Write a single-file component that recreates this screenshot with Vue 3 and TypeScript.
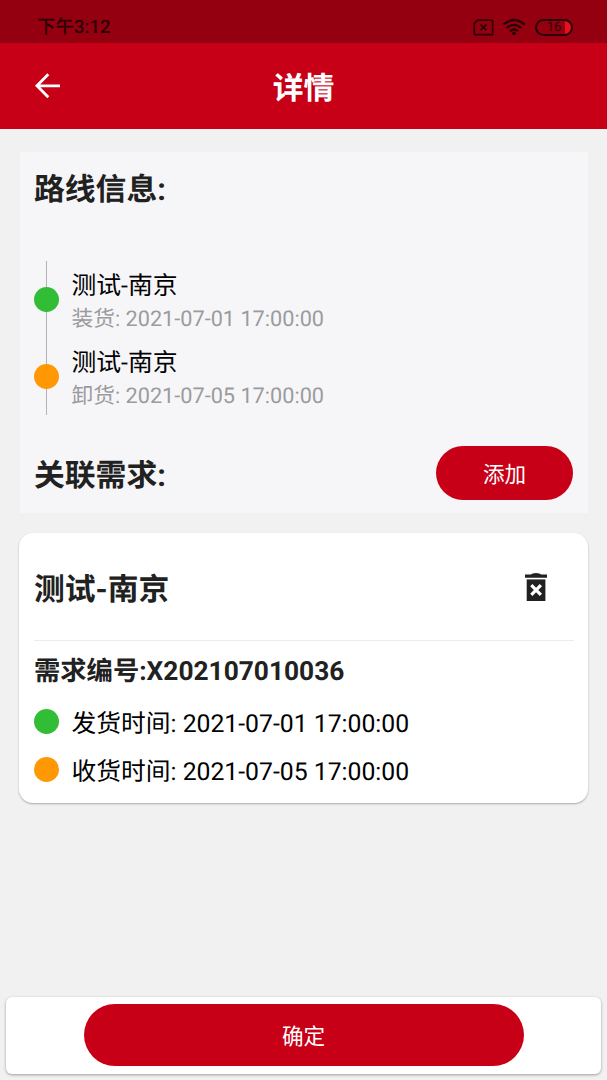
<script setup lang="ts">
interface Stop {
  place: string
  label: string
  time: string
  kind: 'load' | 'unload'
}

interface Demand {
  title: string
  code: string
  times: { label: string; time: string; kind: 'load' | 'unload' }[]
}

const stops: Stop[] = [
  { place: '测试-南京', label: '装货', time: '2021-07-01 17:00:00', kind: 'load' },
  { place: '测试-南京', label: '卸货', time: '2021-07-05 17:00:00', kind: 'unload' },
]

const demand: Demand = {
  title: '测试-南京',
  code: 'X202107010036',
  times: [
    { label: '发货时间', time: '2021-07-01 17:00:00', kind: 'load' },
    { label: '收货时间', time: '2021-07-05 17:00:00', kind: 'unload' },
  ],
}
</script>

<template>
  <div class="screen">
    <div class="status">
      <span class="clock">下午3:12</span>
      <div class="status-icons">
        <svg class="sim" width="21" height="17" viewBox="0 0 21 17">
          <path d="M4.6 1.2H18.3Q19.6 1.2 19.6 2.5V15.6H2.6Q1.3 15.6 1.3 14.3V4.4Z" fill="none" stroke="currentColor" stroke-width="1.7" />
          <path d="M7.4 5.4l6.2 6M13.6 5.4l-6.2 6" stroke="currentColor" stroke-width="1.6" />
        </svg>
        <svg class="wifi" width="24" height="18" viewBox="0 0 24 18">
          <g fill="none" stroke="currentColor" stroke-width="2.3">
            <path d="M1.3 6.6Q12 -2.6 22.7 6.6" />
            <path d="M4.8 10Q12 3.8 19.2 10" />
            <path d="M8 13.2Q12 9.8 16 13.2" />
          </g>
          <circle cx="12" cy="15.4" r="1.8" fill="currentColor" />
        </svg>
        <div class="battery"><span>16</span></div>
      </div>
    </div>

    <header class="bar">
      <svg class="back" width="26" height="26" viewBox="0 0 26 26">
        <path d="M25 12.8H2M13.3 1.3L1.9 12.8L13.3 24.3" fill="none" stroke="currentColor" stroke-width="2.8" />
      </svg>
      <h1>详情</h1>
    </header>

    <main class="content">
      <section class="route">
        <h2>路线信息:</h2>
        <div class="timeline">
          <div v-for="stop in stops" :key="stop.kind" class="stop">
            <div class="rail"><i class="dot" :class="stop.kind"></i></div>
            <div>
              <div class="place">{{ stop.place }}</div>
              <div class="when">{{ stop.label }}: {{ stop.time }}</div>
            </div>
          </div>
        </div>
        <div class="related">
          <h2>关联需求:</h2>
          <button class="add">添加</button>
        </div>
      </section>

      <section class="card">
        <div class="card-head">
          <h2>{{ demand.title }}</h2>
          <svg class="trash" width="22" height="28" viewBox="0 0 22 28">
            <path d="M0 1.6H6Q7 0 11 0Q15 0 16 1.6H22V4.8H0Z" fill="currentColor" />
            <path d="M1.7 6.4H20.4V28H1.7Z" fill="currentColor" />
            <path d="M6.3 12.2l9.6 9.6M15.9 12.2l-9.6 9.6" stroke="#fff" stroke-width="3.2" />
          </svg>
        </div>
        <div class="code">需求编号:{{ demand.code }}</div>
        <div v-for="row in demand.times" :key="row.kind" class="row">
          <i class="dot" :class="row.kind"></i>
          <span>{{ row.label }}: {{ row.time }}</span>
        </div>
      </section>
    </main>

    <footer class="footer">
      <button class="confirm">确定</button>
    </footer>
  </div>
</template>

<style>
body {
  background: #f1f1f1;
}
</style>

<style scoped>
.screen {
  box-sizing: border-box;
  width: 607px;
  height: 1080px;
  display: flex;
  flex-direction: column;
  overflow: hidden;
  background: #f1f1f1;
  font-family: Roboto, "Noto Sans CJK SC", sans-serif;
  text-rendering: geometricPrecision;
  color: #000;
}

h1,
h2 {
  margin: 0;
  font-weight: 700;
}

button {
  border: 0;
  padding: 0;
  font-family: inherit;
  color: #fff;
  background: #c70017;
}

.status {
  box-sizing: border-box;
  height: 43px;
  flex: none;
  display: flex;
  justify-content: space-between;
  padding: 12px 34px 0 37px;
  background: #940010;
  color: #2b0005;
}

.clock {
  font-size: 18.5px;
  line-height: 31px;
  font-weight: 500;
}

.status-icons {
  display: flex;
  align-items: flex-start;
  padding-top: 6px;
}

.sim {
  margin-top: 1px;
}

.wifi {
  margin-left: 8px;
}

.battery {
  box-sizing: border-box;
  width: 38px;
  height: 17px;
  margin: 1px 0 0 9px;
  border: 2px solid #2b0005;
  border-radius: 9px;
  background: linear-gradient(to right, #940010 28px, #e8101c 28px);
  text-align: center;
  font-size: 13px;
  line-height: 14px;
}

.bar {
  height: 86px;
  flex: none;
  display: grid;
  grid-template-columns: 1fr auto 1fr;
  align-items: center;
  background: #c70017;
  color: #fff;
}

.back {
  margin-left: 35px;
}

.bar h1 {
  padding-top: 5px;
  font-size: 30.8px;
  line-height: 40px;
}

.content {
  flex: 1;
  padding: 23px 19px 0;
}

.route {
  box-sizing: border-box;
  height: 361px;
  margin: 0 0 20px 1px;
  padding: 15px 15px 0 14px;
  background: #f6f6f8;
}

h2 {
  font-size: 30.8px;
  line-height: 46px;
  color: #212121;
}

.timeline {
  margin-top: 47.5px;
}

.stop {
  display: flex;
  height: 77px;
  gap: 12.5px;
}

.rail {
  display: flex;
  align-items: center;
  justify-content: center;
  width: 25px;
  background: linear-gradient(#b4b4b6, #b4b4b6) 12px 0 / 1px 100% no-repeat;
}

.dot {
  flex: none;
  width: 25px;
  height: 25px;
  border-radius: 50%;
}

.load {
  background: #32bd37;
}

.unload {
  background: #ff9802;
}

.place {
  margin-top: 8.5px;
  font-size: 24.8px;
  line-height: 36px;
}

.when {
  margin-top: -1px;
  font-size: 21.7px;
  line-height: 32px;
  color: #9b9b9d;
}

.related {
  display: flex;
  align-items: center;
  justify-content: space-between;
  margin-top: 31.5px;
}

.related h2 {
  padding-top: 5px;
}

.add {
  width: 137px;
  height: 54px;
  padding-bottom: 2px;
  border-radius: 27px;
  font-size: 21.6px;
}

.card {
  box-sizing: border-box;
  height: 270px;
  padding: 0 14px 0 15px;
  border-radius: 14px;
  background: #fff;
  box-shadow: 0 1px 2px rgba(0, 0, 0, 0.3);
}

.card-head {
  box-sizing: border-box;
  height: 108px;
  display: flex;
  justify-content: space-between;
  padding: 34px 27px 0 0;
  border-bottom: 1px solid #ececec;
}

.trash {
  margin-top: 6px;
  color: #212121;
}

.code {
  margin-top: 11px;
  font-size: 26.3px;
  line-height: 40px;
  font-weight: 700;
  color: #212121;
}

.row {
  display: flex;
  align-items: center;
  gap: 12.5px;
  height: 48px;
  font-size: 24.75px;
}

.row span {
  padding-top: 2px;
}

.code + .row {
  margin-top: 5px;
}

.footer {
  box-sizing: border-box;
  flex: none;
  height: 77px;
  margin: 0 6px 6px;
  padding-top: 7px;
  border-radius: 6px;
  background: #fff;
  box-shadow: 0 1px 3px rgba(0, 0, 0, 0.35);
}

.confirm {
  display: block;
  width: 440px;
  height: 62px;
  margin: 0 auto;
  padding-bottom: 1px;
  border-radius: 31px;
  font-size: 21.6px;
}
</style>
